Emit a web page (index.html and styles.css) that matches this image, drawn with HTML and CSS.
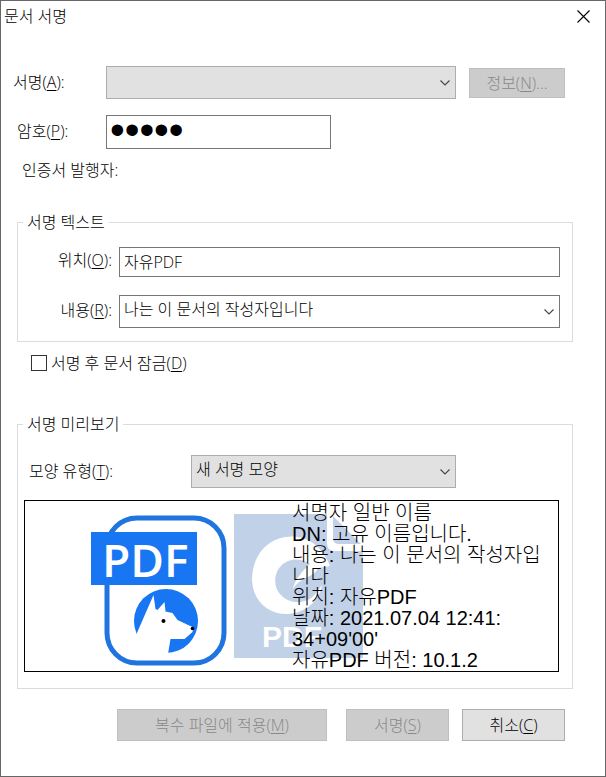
FILE: index.html
```
<!DOCTYPE html>
<html lang="ko">
<head>
  <meta charset="UTF-8">
  <meta name="viewport" content="width=device-width, initial-scale=1.0">
  <title>문서 서명</title>
  <link rel="stylesheet" href="styles.css">
</head>
<body>
  <form class="dialog">
    <header class="titlebar">
      <h1>문서 서명</h1>
      <button type="button" class="close" aria-label="닫기">
        <svg width="13" height="13" viewBox="0 0 13 13"><path d="M.5 .5l12 12M12.5 .5l-12 12" stroke="#000" stroke-width="1.1" fill="none"/></svg>
      </button>
    </header>

    <div class="row cert-row">
      <label for="signer">서명(<u>A</u>):</label>
      <select id="signer" disabled><option></option></select>
      <button type="button" class="button info" disabled>정보(<u>N</u>)...</button>
    </div>
    <div class="row password-row">
      <label for="password">암호(<u>P</u>):</label>
      <input type="password" id="password" value="12345">
    </div>
    <p class="issuer">인증서 발행자:</p>

    <fieldset class="sign-text">
      <legend>서명 텍스트</legend>
      <div class="row">
        <label for="place">위치(<u>O</u>):</label>
        <input type="text" id="place" value="자유PDF">
      </div>
      <div class="row">
        <label for="reason">내용(<u>R</u>):</label>
        <select id="reason"><option>나는 이 문서의 작성자입니다</option></select>
      </div>
    </fieldset>

    <div class="lock">
      <input type="checkbox" id="lock">
      <label for="lock">서명 후 문서 잠금(<u>D</u>)</label>
    </div>

    <fieldset class="sign-preview">
      <legend>서명 미리보기</legend>
      <div class="row type-row">
        <label for="style">모양 유형(<u>T</u>):</label>
        <select id="style"><option>새 서명 모양</option></select>
      </div>
      <div class="preview">
        <svg class="art" width="340" height="170" viewBox="25 501 340 170">
          <!-- PDF badge with dog -->
          <rect x="107" y="518" width="117" height="145" rx="30" fill="#fff" stroke="#2074df" stroke-width="5"/>
          <rect x="91" y="532" width="106" height="53" fill="#1876f2"/>
          <text class="logo-text" x="102" y="577">PDF</text>
          <circle cx="166" cy="621" r="32" fill="#1876f2"/>
          <path d="M136.500 634L153.500 595L155.500 609L157.500 610L164.500 602L165.500 611.500L172.500 613L177.500 620L193.500 627.500L192.500 632L184.500 639H170.500L168 654L140 658L126 640Z" fill="#fff"/>
          <circle cx="163.500" cy="621" r="2" fill="#000"/>
          <circle cx="192.500" cy="628.500" r="1.800" fill="#000"/>
          <!-- reader watermark -->
          <path d="M234 514h93v29q0 8 8 8h28v107H234z" fill="#c1d1e8"/>
          <path d="M333 516l28 28h-22q-6 0-6-6z" fill="#c1d1e8"/>
          <path d="M330 566C322 544 304 534 285 537C262 541 252 561 252 580C253 602 269 614 287 614C305 613 319 602 322 585L316 593C307 606 283 606 276 587C271 566 292 552 310 564C301 572 294 582 293 589C301 576 314 578 318 568Z" fill="#fff"/>
          <text class="mark-text" x="262" y="647">PDF</text>
        </svg>
        <p class="details">
          <span>서명자 일반 이름</span>
          <span>DN: 고유 이름입니다.</span>
          <span>내용: 나는 이 문서의 작성자입</span>
          <span>니다</span>
          <span>위치: 자유PDF</span>
          <span>날짜: 2021.07.04 12:41:</span>
          <span>34+09'00'</span>
          <span>자유PDF 버전: 10.1.2</span>
        </p>
      </div>
    </fieldset>

    <footer class="actions">
      <button type="button" class="button apply" disabled>복수 파일에 적용(<u>M</u>)</button>
      <button type="submit" class="button" disabled>서명(<u>S</u>)</button>
      <button type="button" class="button">취소(<u>C</u>)</button>
    </footer>
  </form>
</body>
</html>
```
FILE: styles.css
```
* { box-sizing: border-box; }
body { margin: 0; background: #fff; color: #000; font: 300 16px/20px "Open Sans", "Noto Sans CJK KR", sans-serif; }
h1, p { margin: 0; font: inherit; }
input, select, button { font: inherit; color: inherit; margin: 0; border-radius: 0; }
u { text-underline-offset: 2px; text-decoration-thickness: 1px; }

.dialog { display: flex; flex-direction: column; min-height: 100vh; border: 1px solid #666; }
.titlebar { display: flex; justify-content: space-between; align-items: center; height: 30px; padding: 0 15px 0 3px; }
.close { display: flex; padding: 0; border: 0; background: none; }

.row { display: flex; align-items: center; }
.row label { padding-bottom: 2px; }
.cert-row { margin: 35px 40px 0 12px; }
.cert-row label { width: 93px; }
.cert-row select { flex: 1; min-width: 0; }
.password-row { margin: 16px 40px 0 16px; }
.password-row label { width: 89px; }
.issuer { margin: 11px 0 0 21px; }

input[type="text"], input[type="password"], select { height: 33px; padding: 0 4px; border: 1px solid #777; background: #fff; outline: 0; }
input[type="password"] { width: 225px; height: 34px; padding: 0 3px 4px; font: 42px/28px "Liberation Sans", sans-serif; }
input[type="text"] { height: 30px; padding-bottom: 3px; }
select { padding: 0 24px 6px 4px; appearance: none; background: url("data:image/svg+xml,%3Csvg xmlns='http://www.w3.org/2000/svg' width='10' height='6'%3E%3Cpath d='M.5 .5L5 5L9.500 .5' fill='none' stroke='%23444' stroke-width='1.100'/%3E%3C/svg%3E") no-repeat right 5px center #fff; }
.cert-row select, .type-row select { border-color: #adadad; background-color: #e1e1e1; opacity: 1; }

fieldset { min-width: 0; margin: 0 32px 0 16px; border: 1px solid #dcdcdc; }
legend { padding: 0 4px; }
.sign-text { margin-top: 32px; padding: 15px 12px 13px 5px; }
.sign-text .row + .row { margin-top: 18px; }
.sign-text label { width: 96px; padding: 0 7px 4px 0; text-align: right; }
.sign-text input, .sign-text select { flex: 1; min-width: 0; }

.lock { display: flex; align-items: center; gap: 4px; margin: 11px 0 0 30px; }
.lock input { width: 16px; height: 16px; appearance: none; border: 1px solid #333; background: #fff; }

.sign-preview { margin-top: 41px; padding: 21px 13px 16px 5px; }
.type-row { padding-left: 1px; }
.type-row label { width: 167px; padding-left: 5px; }
.type-row select { width: 265px; }
.preview { display: grid; grid-template-columns: 267px 1fr; margin: 12px 0 0 1px; height: 172px; border: 1px solid #000; overflow: hidden; }
/* the artwork runs under the text column */
.preview > * { grid-row: 1; }
.art { grid-column: 1 / -1; }
.details { grid-column: 2; padding-top: 2px; font: 300 20px/21px "Liberation Sans", "Noto Sans CJK KR", sans-serif; white-space: nowrap; }
.details span { display: block; }
.logo-text { font: 600 46px "Open Sans", sans-serif; fill: #fff; }
.mark-text { font: 700 30px "Liberation Sans", sans-serif; fill: #fff; }

.button { min-width: 103px; height: 32px; padding: 0 8px; border: 1px solid #adadad; background: #e1e1e1; }
.button:disabled { border-color: #bfbfbf; background: #ccc; color: #888; }
.info { width: 96px; min-width: 0; height: 30px; margin-left: 13px; }
.actions { display: flex; justify-content: flex-end; gap: 13px; margin: 20px 40px 34px 16px; }
.apply { width: 210px; margin-right: 6px; }
```
